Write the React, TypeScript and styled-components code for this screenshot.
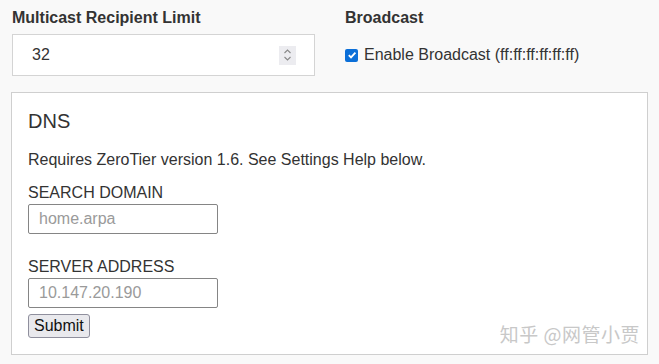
import React, {useState} from 'react';
import styled, {createGlobalStyle} from 'styled-components';

const GlobalStyle = createGlobalStyle`
  html, body {
    margin: 0;
    padding: 0;
    background: #f9f9f9;
    font-family: "Liberation Sans", Arial, sans-serif;
    color: #333;
  }
`;

const Page = styled.div`
  position: relative;
  width: 659px;
  height: 364px;
  padding: 8px 12px 0 11px;
  box-sizing: border-box;
`;

const TopRow = styled.div`
  display: grid;
  grid-template-columns: 303px 1fr;
  column-gap: 30px;
  padding-left: 1px;
`;

const Field = styled.div`
  display: flex;
  flex-direction: column;
`;

const FieldLabel = styled.div`
  font-size: 16px;
  font-weight: bold;
  line-height: 20px;
  color: #333;
  height: 26px;
`;

const NumberBox = styled.div`
  display: flex;
  align-items: center;
  height: 42px;
  box-sizing: border-box;
  border: 1px solid #d4d4d4;
  background: #fff;
  padding: 0 18px 0 19px;
  font-size: 16px;
`;

const NumberValue = styled.span`
  flex: 1;
`;

const Spinner = styled.div`
  width: 17px;
  height: 19px;
  background: #ececf0;
  display: flex;
  align-items: center;
  justify-content: center;
`;

const CheckRow = styled.label`
  display: flex;
  align-items: center;
  height: 42px;
  gap: 6px;
  font-size: 16px;
  color: #333;
`;

const CheckBox = styled.span`
  width: 13px;
  height: 13px;
  border-radius: 2px;
  background: #0b6fd8;
  display: flex;
  align-items: center;
  justify-content: center;
`;

const Panel = styled.section`
  margin-top: 16px;
  width: 637px;
  height: 263px;
  box-sizing: border-box;
  border: 1px solid #cfcfcf;
  background: #fff;
  padding: 17px 16px 0 16px;
`;

const PanelTitle = styled.h3`
  margin: 0;
  font-size: 20px;
  font-weight: normal;
  line-height: 23px;
  color: #333;
`;

const Note = styled.p`
  margin: 18px 0 0;
  font-size: 16px;
  line-height: 18px;
`;

const SmallLabel = styled.div<{$top: number}>`
  margin-top: ${p => p.$top}px;
  font-size: 16px;
  line-height: 18px;
  height: 20px;
`;

const TextInput = styled.input`
  display: block;
  width: 190px;
  height: 30px;
  box-sizing: border-box;
  border: 1px solid #858585;
  border-radius: 2px;
  padding: 0 10px;
  font-family: inherit;
  font-size: 16px;
  color: #333;
  &::placeholder {
    color: #9a9a9a;
  }
`;

const SubmitButton = styled.button`
  display: block;
  margin-top: 6px;
  height: 24px;
  padding: 0 5px;
  font-family: inherit;
  font-size: 16px;
  color: #111;
  background: #e9e9ed;
  border: 1px solid #8f8f9d;
  border-radius: 3px;
`;

const Watermark = styled.div`
  position: absolute;
  right: 19px;
  bottom: 17px;
  font-family: "Noto Sans CJK SC", sans-serif;
  font-size: 19px;
  color: #c8c8c8;
  letter-spacing: 0.5px;
`;

export default function App() {
  const [search, setSearch] = useState('');
  const [server, setServer] = useState('');

  return (
    <Page>
      <GlobalStyle />
      <TopRow>
        <Field>
          <FieldLabel>Multicast Recipient Limit</FieldLabel>
          <NumberBox>
            <NumberValue>32</NumberValue>
            <Spinner>
              <svg width="9" height="14" viewBox="0 0 9 14" fill="none" stroke="#888" strokeWidth="1.1">
                <path d="M1.5 5 L4.5 2 L7.5 5" />
                <path d="M1.5 9 L4.5 12 L7.5 9" />
              </svg>
            </Spinner>
          </NumberBox>
        </Field>
        <Field>
          <FieldLabel>Broadcast</FieldLabel>
          <CheckRow>
            <CheckBox>
              <svg width="10" height="10" viewBox="0 0 10 10" fill="none" stroke="#fff" strokeWidth="1.8">
                <path d="M1.8 5.2 L4 7.4 L8.4 2.6" />
              </svg>
            </CheckBox>
            Enable Broadcast (ff:ff:ff:ff:ff:ff)
          </CheckRow>
        </Field>
      </TopRow>

      <Panel>
        <PanelTitle>DNS</PanelTitle>
        <Note>Requires ZeroTier version 1.6. See Settings Help below.</Note>
        <SmallLabel $top={15}>SEARCH DOMAIN</SmallLabel>
        <TextInput
          placeholder="home.arpa"
          value={search}
          onChange={e => setSearch(e.currentTarget.value)}
        />
        <SmallLabel $top={24}>SERVER ADDRESS</SmallLabel>
        <TextInput
          placeholder="10.147.20.190"
          value={server}
          onChange={e => setServer(e.currentTarget.value)}
        />
        <SubmitButton>Submit</SubmitButton>
      </Panel>

      <Watermark>知乎 @网管小贾</Watermark>
    </Page>
  );
}
